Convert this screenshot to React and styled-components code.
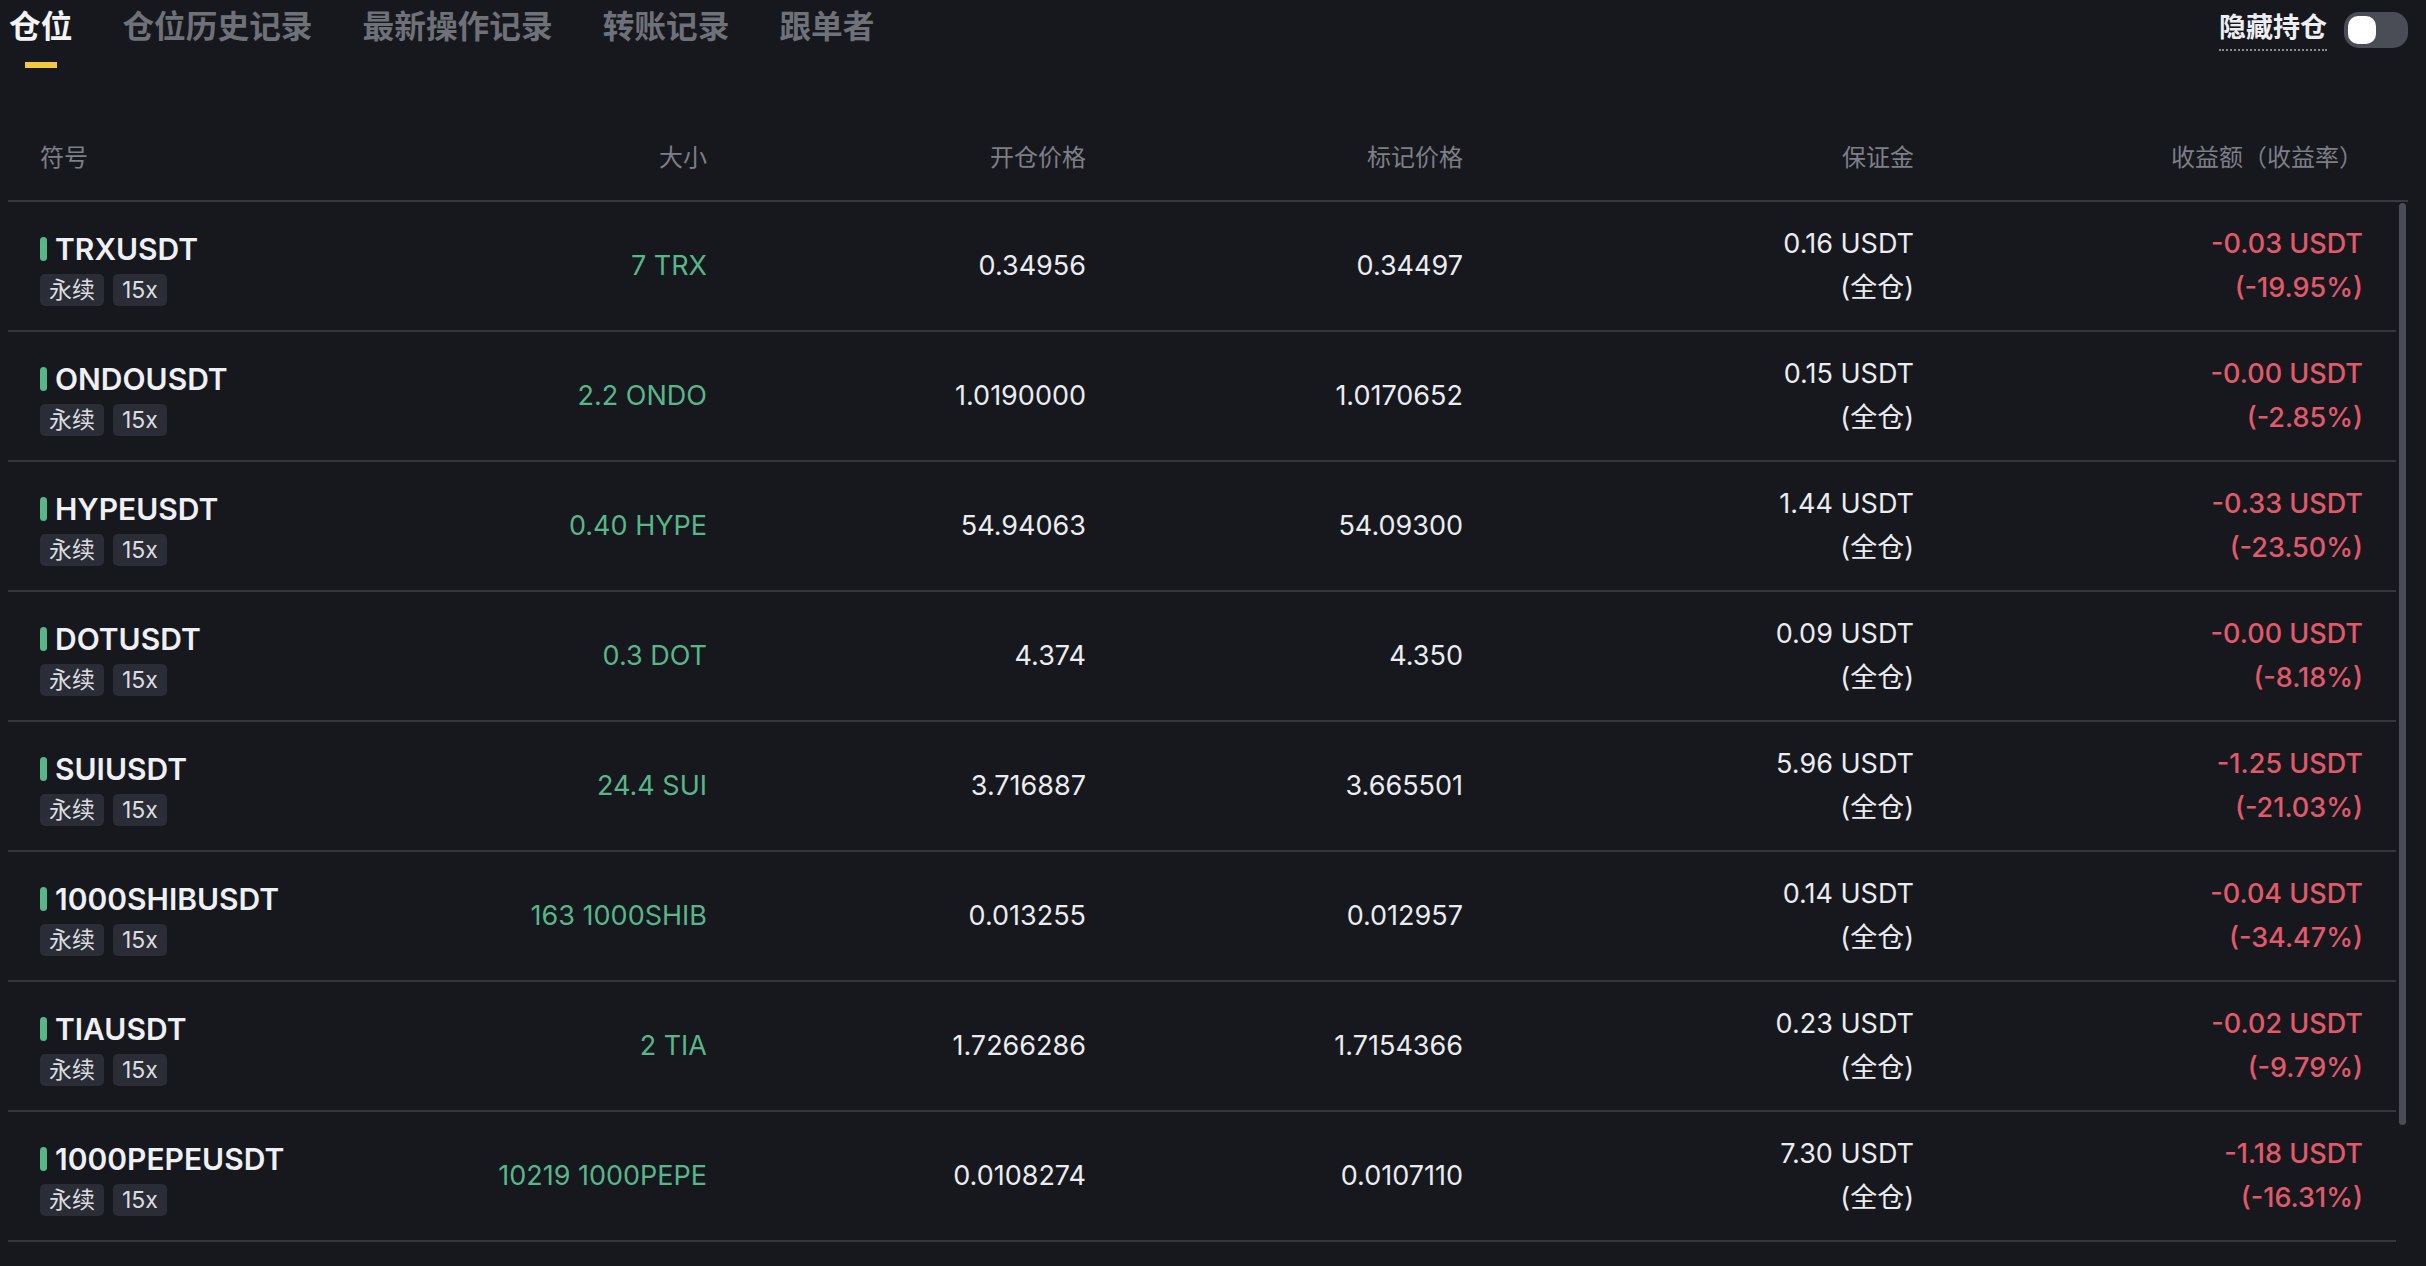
import React from 'react'
import styled, { createGlobalStyle } from 'styled-components'

const GlobalStyle = createGlobalStyle`
    html, body {
        margin: 0;
        padding: 0;
        background: #17181e;
        overflow: hidden;
    }
    body {
        font-family: Inter, "Noto Sans CJK SC", sans-serif;
        color: #eaecef;
    }
`

const Page = styled.div`
    width: 2426px;
    height: 1266px;
    padding: 0 18px 0 8px;
    box-sizing: border-box;
    display: flex;
    flex-direction: column;
    background: #17181e;
`

const TopBar = styled.div`
    height: 72px;
    display: flex;
    justify-content: space-between;
    align-items: flex-start;
`

const Tabs = styled.div`
    display: flex;
    gap: 50px;
    padding-left: 1px;
`

const Tab = styled.div`
    display: flex;
    flex-direction: column;
    align-items: center;
    font-size: 31.7px;
    line-height: 40px;
    font-weight: 600;
    padding-top: 7px;
    color: ${p => (p.active ? '#f2f3f5' : '#6e7178')};
    &::after {
        content: '';
        display: block;
        width: 32px;
        height: 6px;
        margin-top: 15px;
        background: ${p => (p.active ? '#f0c93e' : 'transparent')};
    }
`

const HideBox = styled.div`
    display: flex;
    align-items: center;
    gap: 17px;
    padding-top: 9px;
`

const HideLabel = styled.span`
    font-size: 27px;
    font-weight: 700;
    line-height: 34px;
    color: #eceef1;
    border-bottom: 2px dotted #8a8d94;
    padding-bottom: 4px;
    margin-top: 2px;
`

const Toggle = styled.div`
    width: 64px;
    height: 36px;
    border-radius: 15px;
    background: #4a4d56;
    box-sizing: border-box;
    padding: 4px;
    display: flex;
    align-items: center;
`

const Knob = styled.div`
    width: 28px;
    height: 28px;
    border-radius: 10px;
    background: #ffffff;
`

const Table = styled.div`
    width: 2400px;
    display: flex;
    flex-direction: column;
    flex: 1;
    min-height: 0;
`

const cols = '420px 247px 379px 377px 451px 449px'

const HeadRow = styled.div`
    display: grid;
    grid-template-columns: ${cols};
    padding: 75px 0 31px 32px;
    border-bottom: 2px solid #363940;
`

const HeadCell = styled.div`
    font-size: 24px;
    line-height: 22px;
    color: #7c7f86;
    text-align: ${p => (p.left ? 'left' : 'right')};
`

const Body = styled.div`
    position: relative;
    flex: 1;
    overflow: hidden;
`

const Row = styled.div`
    width: 2356px;
    height: 128px;
    display: grid;
    grid-template-columns: ${cols};
    align-items: center;
    padding-left: 32px;
    border-bottom: 2px solid #34373e;
`

const SymbolCell = styled.div`
    display: flex;
    flex-direction: column;
    gap: 9px;
    padding-top: 7px;
`

const NameLine = styled.div`
    display: flex;
    align-items: center;
    gap: 8px;
    font-size: 30px;
    line-height: 32px;
    font-weight: 600;
    color: #eef0f3;
`

const SideBar = styled.span`
    width: 7px;
    height: 24px;
    border-radius: 4px;
    background: #58b689;
`

const Tags = styled.div`
    display: flex;
    gap: 9px;
`

const Tag = styled.span`
    height: 32px;
    padding: 0 9px;
    border-radius: 5px;
    background: #2a2d35;
    font-size: 23px;
    line-height: 32px;
    color: #dcdde0;
`

const Value = styled.div`
    text-align: right;
    font-size: 27px;
    line-height: 44px;
    font-weight: ${p => (p.strong ? 500 : 400)};
    color: ${p => p.color || '#eaecef'};
`

const Thumb = styled.div`
    position: absolute;
    top: 1px;
    right: 2px;
    width: 7px;
    height: 922px;
    border-radius: 4px;
    background: #4a4d56;
`

const tabs = ['仓位', '仓位历史记录', '最新操作记录', '转账记录', '跟单者']

const positions = [
    ['TRXUSDT', '7 TRX', '0.34956', '0.34497', '0.16 USDT', '-0.03 USDT', '(-19.95%)'],
    ['ONDOUSDT', '2.2 ONDO', '1.0190000', '1.0170652', '0.15 USDT', '-0.00 USDT', '(-2.85%)'],
    ['HYPEUSDT', '0.40 HYPE', '54.94063', '54.09300', '1.44 USDT', '-0.33 USDT', '(-23.50%)'],
    ['DOTUSDT', '0.3 DOT', '4.374', '4.350', '0.09 USDT', '-0.00 USDT', '(-8.18%)'],
    ['SUIUSDT', '24.4 SUI', '3.716887', '3.665501', '5.96 USDT', '-1.25 USDT', '(-21.03%)'],
    ['1000SHIBUSDT', '163 1000SHIB', '0.013255', '0.012957', '0.14 USDT', '-0.04 USDT', '(-34.47%)'],
    ['TIAUSDT', '2 TIA', '1.7266286', '1.7154366', '0.23 USDT', '-0.02 USDT', '(-9.79%)'],
    ['1000PEPEUSDT', '10219 1000PEPE', '0.0108274', '0.0107110', '7.30 USDT', '-1.18 USDT', '(-16.31%)'],
]

const GREEN = '#58b689'
const RED = '#e2596a'

export default function App() {
    return (
        <>
            <GlobalStyle />
            <Page>
                <TopBar>
                    <Tabs>
                        {tabs.map((t, i) => (
                            <Tab key={t} active={i === 0}>{t}</Tab>
                        ))}
                    </Tabs>
                    <HideBox>
                        <HideLabel>隐藏持仓</HideLabel>
                        <Toggle><Knob /></Toggle>
                    </HideBox>
                </TopBar>
                <Table>
                    <HeadRow>
                        <HeadCell left>符号</HeadCell>
                        <HeadCell>大小</HeadCell>
                        <HeadCell>开仓价格</HeadCell>
                        <HeadCell>标记价格</HeadCell>
                        <HeadCell>保证金</HeadCell>
                        <HeadCell>收益额（收益率）</HeadCell>
                    </HeadRow>
                    <Body>
                        {positions.map(p => (
                            <Row key={p[0]}>
                                <SymbolCell>
                                    <NameLine><SideBar />{p[0]}</NameLine>
                                    <Tags>
                                        <Tag>永续</Tag>
                                        <Tag>15x</Tag>
                                    </Tags>
                                </SymbolCell>
                                <Value color={GREEN}>{p[1]}</Value>
                                <Value>{p[2]}</Value>
                                <Value>{p[3]}</Value>
                                <Value>{p[4]}<br />(全仓)</Value>
                                <Value strong color={RED}>{p[5]}<br />{p[6]}</Value>
                            </Row>
                        ))}
                        <Thumb />
                    </Body>
                </Table>
            </Page>
        </>
    )
}
